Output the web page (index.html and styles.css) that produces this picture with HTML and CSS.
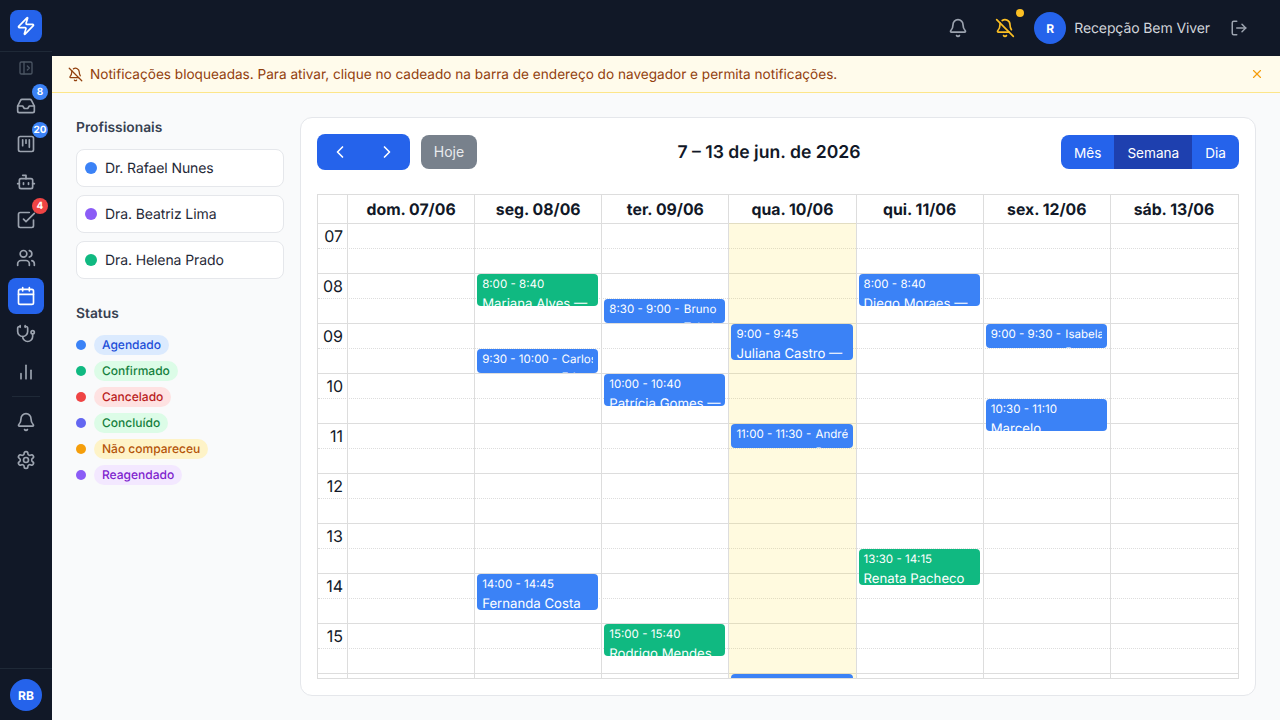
FILE: index.html
```html
<!DOCTYPE html>
<html lang="pt-BR">
<head>
    <meta charset="UTF-8">
    <meta name="viewport" content="width=device-width, initial-scale=1.0">
    <title>Agenda - Bem Viver</title>
    <link rel="stylesheet" href="styles.css">
</head>
<body>
    <svg class="sprite" xmlns="http://www.w3.org/2000/svg">
        <symbol id="i-zap" viewBox="0 0 24 24"><path d="M4 14a1 1 0 0 1-.78-1.63l9.9-10.2a.5.5 0 0 1 .86.46l-1.92 6.02A1 1 0 0 0 13 10h7a1 1 0 0 1 .78 1.63l-9.9 10.2a.5.5 0 0 1-.86-.46l1.92-6.02A1 1 0 0 0 11 14z"/></symbol>
        <symbol id="i-panel" viewBox="0 0 24 24"><rect x="3" y="3" width="18" height="18" rx="2"/><path d="M9 3v18"/><path d="m14 9 3 3-3 3"/></symbol>
        <symbol id="i-inbox" viewBox="0 0 24 24"><polyline points="22 12 16 12 14 15 10 15 8 12 2 12"/><path d="M5.45 5.11 2 12v6a2 2 0 0 0 2 2h16a2 2 0 0 0 2-2v-6l-3.45-6.89A2 2 0 0 0 16.76 4H7.24a2 2 0 0 0-1.79 1.11z"/></symbol>
        <symbol id="i-kanban" viewBox="0 0 24 24"><rect x="3" y="3" width="18" height="18" rx="2"/><path d="M8 7v7"/><path d="M12 7v4"/><path d="M16 7v9"/></symbol>
        <symbol id="i-bot" viewBox="0 0 24 24"><path d="M12 8V4H8"/><rect x="4" y="8" width="16" height="12" rx="2"/><path d="M2 14h2"/><path d="M20 14h2"/><path d="M15 13v2"/><path d="M9 13v2"/></symbol>
        <symbol id="i-check" viewBox="0 0 24 24"><path d="m9 11 3 3L22 4"/><path d="M21 12v7a2 2 0 0 1-2 2H5a2 2 0 0 1-2-2V5a2 2 0 0 1 2-2h11"/></symbol>
        <symbol id="i-users" viewBox="0 0 24 24"><path d="M16 21v-2a4 4 0 0 0-4-4H6a4 4 0 0 0-4 4v2"/><circle cx="9" cy="7" r="4"/><path d="M22 21v-2a4 4 0 0 0-3-3.87"/><path d="M16 3.13a4 4 0 0 1 0 7.75"/></symbol>
        <symbol id="i-calendar" viewBox="0 0 24 24"><path d="M8 2v4"/><path d="M16 2v4"/><rect x="3" y="4" width="18" height="18" rx="2"/><path d="M3 10h18"/></symbol>
        <symbol id="i-stethoscope" viewBox="0 0 24 24"><path d="M11 2v2"/><path d="M5 2v2"/><path d="M5 3H4a2 2 0 0 0-2 2v4a6 6 0 0 0 12 0V5a2 2 0 0 0-2-2h-1"/><path d="M8 15a6 6 0 0 0 12 0v-3"/><circle cx="20" cy="10" r="2"/></symbol>
        <symbol id="i-chart" viewBox="0 0 24 24"><path d="M18 20V10"/><path d="M12 20V4"/><path d="M6 20v-6"/></symbol>
        <symbol id="i-bell" viewBox="0 0 24 24"><path d="M10.268 21a2 2 0 0 0 3.464 0"/><path d="M3.262 15.326A1 1 0 0 0 4 17h16a1 1 0 0 0 .74-1.673C19.41 13.956 18 12.499 18 8A6 6 0 0 0 6 8c0 4.499-1.411 5.956-2.738 7.326"/></symbol>
        <symbol id="i-bell-off" viewBox="0 0 24 24"><path d="M10.268 21a2 2 0 0 0 3.464 0"/><path d="M17 17H4a1 1 0 0 1-.74-1.673C4.59 13.956 6 12.499 6 8a6 6 0 0 1 .258-1.742"/><path d="m2 2 20 20"/><path d="M8.668 3.01A6 6 0 0 1 18 8c0 2.687.77 4.653 1.707 6.05"/></symbol>
        <symbol id="i-settings" viewBox="0 0 24 24"><path d="M12.22 2h-.44a2 2 0 0 0-2 2v.18a2 2 0 0 1-1 1.73l-.43.25a2 2 0 0 1-2 0l-.15-.08a2 2 0 0 0-2.73.73l-.22.38a2 2 0 0 0 .73 2.73l.15.1a2 2 0 0 1 1 1.72v.51a2 2 0 0 1-1 1.74l-.15.09a2 2 0 0 0-.73 2.73l.22.38a2 2 0 0 0 2.73.73l.15-.08a2 2 0 0 1 2 0l.43.25a2 2 0 0 1 1 1.73V20a2 2 0 0 0 2 2h.44a2 2 0 0 0 2-2v-.18a2 2 0 0 1 1-1.73l.43-.25a2 2 0 0 1 2 0l.15.08a2 2 0 0 0 2.73-.73l.22-.39a2 2 0 0 0-.73-2.73l-.15-.08a2 2 0 0 1-1-1.74v-.5a2 2 0 0 1 1-1.74l.15-.09a2 2 0 0 0 .73-2.73l-.22-.38a2 2 0 0 0-2.73-.73l-.15.08a2 2 0 0 1-2 0l-.43-.25a2 2 0 0 1-1-1.73V4a2 2 0 0 0-2-2z"/><circle cx="12" cy="12" r="3"/></symbol>
        <symbol id="i-logout" viewBox="0 0 24 24"><path d="M9 21H5a2 2 0 0 1-2-2V5a2 2 0 0 1 2-2h4"/><polyline points="16 17 21 12 16 7"/><line x1="21" y1="12" x2="9" y2="12"/></symbol>
        <symbol id="i-x" viewBox="0 0 24 24"><path d="M18 6 6 18"/><path d="m6 6 12 12"/></symbol>
        <symbol id="i-left" viewBox="0 0 24 24"><path d="m15 18-6-6 6-6"/></symbol>
        <symbol id="i-right" viewBox="0 0 24 24"><path d="m9 18 6-6-6-6"/></symbol>
    </svg>

    <div class="app">
        <aside class="sidebar">
            <div class="logo-wrap">
                <div class="logo"><svg class="icon icon-20"><use href="#i-zap"/></svg></div>
            </div>
            <button class="sidebar-toggle"><svg class="icon icon-16"><use href="#i-panel"/></svg></button>
            <nav class="side-nav">
                <a class="nav-item"><svg class="icon icon-20"><use href="#i-inbox"/></svg><span class="nav-badge">8</span></a>
                <a class="nav-item"><svg class="icon icon-20"><use href="#i-kanban"/></svg><span class="nav-badge">20</span></a>
                <a class="nav-item"><svg class="icon icon-20"><use href="#i-bot"/></svg></a>
                <a class="nav-item"><svg class="icon icon-20"><use href="#i-check"/></svg><span class="nav-badge nav-badge-red">4</span></a>
                <a class="nav-item"><svg class="icon icon-20"><use href="#i-users"/></svg></a>
                <a class="nav-item active"><svg class="icon icon-20"><use href="#i-calendar"/></svg></a>
                <a class="nav-item"><svg class="icon icon-20"><use href="#i-stethoscope"/></svg></a>
                <a class="nav-item"><svg class="icon icon-20"><use href="#i-chart"/></svg></a>
                <div class="nav-sep"></div>
                <a class="nav-item"><svg class="icon icon-20"><use href="#i-bell"/></svg></a>
                <a class="nav-item"><svg class="icon icon-20"><use href="#i-settings"/></svg></a>
            </nav>
            <div class="sidebar-foot">
                <div class="avatar">RB</div>
            </div>
        </aside>

        <div class="main">
            <header class="topbar">
                <button class="top-btn"><svg class="icon icon-20"><use href="#i-bell"/></svg></button>
                <button class="top-btn top-btn-warn"><svg class="icon icon-20"><use href="#i-bell-off"/></svg><span class="top-dot"></span></button>
                <div class="avatar avatar-small">R</div>
                <span class="user-name">Recepção Bem Viver</span>
                <button class="top-btn top-btn-logout"><svg class="icon icon-18"><use href="#i-logout"/></svg></button>
            </header>

            <div class="banner">
                <svg class="icon icon-15"><use href="#i-bell-off"/></svg>
                <span class="banner-text">Notificações bloqueadas. Para ativar, clique no cadeado na barra de endereço do navegador e permita notificações.</span>
                <svg class="icon icon-14 banner-close"><use href="#i-x"/></svg>
            </div>

            <div class="content">
                <section class="filters">
                    <h3 class="filter-title">Profissionais</h3>
                    <div class="pro-list">
                        <div class="pro-card"><span class="pro-dot dot-blue"></span>Dr. Rafael Nunes</div>
                        <div class="pro-card"><span class="pro-dot dot-purple"></span>Dra. Beatriz Lima</div>
                        <div class="pro-card"><span class="pro-dot dot-green"></span>Dra. Helena Prado</div>
                    </div>
                    <h3 class="filter-title status-title">Status</h3>
                    <div class="status-list">
                        <div class="status-row"><span class="status-dot dot-blue"></span><span class="pill pill-blue">Agendado</span></div>
                        <div class="status-row"><span class="status-dot dot-green"></span><span class="pill pill-green">Confirmado</span></div>
                        <div class="status-row"><span class="status-dot dot-red"></span><span class="pill pill-red">Cancelado</span></div>
                        <div class="status-row"><span class="status-dot dot-indigo"></span><span class="pill pill-green">Concluído</span></div>
                        <div class="status-row"><span class="status-dot dot-amber"></span><span class="pill pill-amber">Não compareceu</span></div>
                        <div class="status-row"><span class="status-dot dot-purple"></span><span class="pill pill-purple">Reagendado</span></div>
                    </div>
                </section>

                <section class="cal-card">
                    <div class="toolbar">
                        <div class="toolbar-left">
                            <div class="nav-group">
                                <button class="cal-arrow"><svg class="icon icon-20"><use href="#i-left"/></svg></button>
                                <button class="cal-arrow"><svg class="icon icon-20"><use href="#i-right"/></svg></button>
                            </div>
                            <button class="today-btn">Hoje</button>
                        </div>
                        <h2 class="cal-title">7 – 13 de jun. de 2026</h2>
                        <div class="view-group">
                            <button class="view-btn">Mês</button>
                            <button class="view-btn active">Semana</button>
                            <button class="view-btn">Dia</button>
                        </div>
                    </div>

                    <div class="cal">
                        <div class="cal-head">
                            <div class="time-col"></div>
                            <div class="head-cell">dom. 07/06</div>
                            <div class="head-cell">seg. 08/06</div>
                            <div class="head-cell">ter. 09/06</div>
                            <div class="head-cell">qua. 10/06</div>
                            <div class="head-cell">qui. 11/06</div>
                            <div class="head-cell">sex. 12/06</div>
                            <div class="head-cell">sáb. 13/06</div>
                        </div>
                        <div class="cal-body">
                            <div class="slot"><span class="slot-label">07</span></div><div class="slot slot-minor"></div>
                            <div class="slot"><span class="slot-label">08</span></div><div class="slot slot-minor"></div>
                            <div class="slot"><span class="slot-label">09</span></div><div class="slot slot-minor"></div>
                            <div class="slot"><span class="slot-label">10</span></div><div class="slot slot-minor"></div>
                            <div class="slot"><span class="slot-label">11</span></div><div class="slot slot-minor"></div>
                            <div class="slot"><span class="slot-label">12</span></div><div class="slot slot-minor"></div>
                            <div class="slot"><span class="slot-label">13</span></div><div class="slot slot-minor"></div>
                            <div class="slot"><span class="slot-label">14</span></div><div class="slot slot-minor"></div>
                            <div class="slot"><span class="slot-label">15</span></div><div class="slot slot-minor"></div>
                            <div class="slot"><span class="slot-label">16</span></div><div class="slot slot-minor"></div>

                            <div class="day-cols">
                                <div class="time-col"></div>
                                <div class="day"></div>
                                <div class="day">
                                    <div class="event event-green" style="top: 51px; height: 32px">
                                        <div class="event-time">8:00 - 8:40</div>
                                        <div class="event-name">Mariana Alves — Consulta</div>
                                    </div>
                                    <div class="event event-short" style="top: 126px; height: 24px">
                                        <div class="event-time">9:30 - 10:00</div>
                                        <div class="event-name">Carlos Eduardo — Retorno</div>
                                    </div>
                                    <div class="event" style="top: 351px; height: 36px">
                                        <div class="event-time">14:00 - 14:45</div>
                                        <div class="event-name">Fernanda Costa — Consulta</div>
                                    </div>
                                </div>
                                <div class="day">
                                    <div class="event event-short" style="top: 76px; height: 24px">
                                        <div class="event-time">8:30 - 9:00</div>
                                        <div class="event-name">Bruno Toledo — Retorno</div>
                                    </div>
                                    <div class="event" style="top: 151px; height: 32px">
                                        <div class="event-time">10:00 - 10:40</div>
                                        <div class="event-name">Patrícia Gomes — Consulta</div>
                                    </div>
                                    <div class="event event-green" style="top: 401px; height: 32px">
                                        <div class="event-time">15:00 - 15:40</div>
                                        <div class="event-name">Rodrigo Mendes — Consulta</div>
                                    </div>
                                </div>
                                <div class="day day-today">
                                    <div class="event" style="top: 101px; height: 36px">
                                        <div class="event-time">9:00 - 9:45</div>
                                        <div class="event-name">Juliana Castro — Consulta</div>
                                    </div>
                                    <div class="event event-short" style="top: 201px; height: 24px">
                                        <div class="event-time">11:00 - 11:30</div>
                                        <div class="event-name">André Barros — Retorno</div>
                                    </div>
                                    <div class="event" style="top: 451px; height: 36px">
                                        <div class="event-time">16:00 - 16:45</div>
                                        <div class="event-name">Laura Tavares — Consulta</div>
                                    </div>
                                </div>
                                <div class="day">
                                    <div class="event" style="top: 51px; height: 32px">
                                        <div class="event-time">8:00 - 8:40</div>
                                        <div class="event-name">Diego Moraes — Consulta</div>
                                    </div>
                                    <div class="event event-green" style="top: 326px; height: 36px">
                                        <div class="event-time">13:30 - 14:15</div>
                                        <div class="event-name">Renata Pacheco — Consulta</div>
                                    </div>
                                </div>
                                <div class="day">
                                    <div class="event event-short" style="top: 101px; height: 24px">
                                        <div class="event-time">9:00 - 9:30</div>
                                        <div class="event-name">Isabela Duarte — Retorno</div>
                                    </div>
                                    <div class="event" style="top: 176px; height: 32px">
                                        <div class="event-time">10:30 - 11:10</div>
                                        <div class="event-name">Marcelo Vasconcelos — Consulta</div>
                                    </div>
                                </div>
                                <div class="day"></div>
                            </div>
                        </div>
                    </div>
                </section>
            </div>
        </div>
    </div>
</body>
</html>
```

FILE: styles.css
```css
* {
    box-sizing: border-box;
}
html, body {
    height: 100%;
}
body {
    margin: 0;
    overflow: hidden;
    font-family: Inter, "Liberation Sans", sans-serif;
    font-size: 14px;
    color: #111827;
    background: #f9fafb;
    text-rendering: geometricPrecision;
}
button {
    font: inherit;
    border: none;
    background: none;
    color: inherit;
    padding: 0;
}
h2, h3 {
    margin: 0;
}
.sprite {
    display: none;
}
.icon {
    display: block;
    flex: none;
    fill: none;
    stroke: currentColor;
    stroke-width: 2;
    stroke-linecap: round;
    stroke-linejoin: round;
}
.icon-14 { width: 14px; height: 14px; }
.icon-15 { width: 15px; height: 15px; }
.icon-16 { width: 16px; height: 16px; }
.icon-18 { width: 18px; height: 18px; }
.icon-20 { width: 20px; height: 20px; }

.app {
    display: flex;
    height: 720px;
}

/* sidebar */
.sidebar {
    width: 52px;
    flex: none;
    display: flex;
    flex-direction: column;
    background: #111827;
}
.logo-wrap {
    height: 52px;
    display: flex;
    justify-content: center;
    padding-top: 10px;
    border-bottom: 1px solid #1f2937;
}
.logo {
    width: 32px;
    height: 32px;
    display: flex;
    align-items: center;
    justify-content: center;
    border-radius: 8px;
    background: #2563eb;
    color: #fff;
}
.sidebar-toggle {
    display: flex;
    justify-content: center;
    margin-top: 8px;
    color: #4b5563;
}
.side-nav {
    flex: 1;
    display: flex;
    flex-direction: column;
    align-items: center;
    gap: 2px;
    padding-top: 12px;
}
.nav-item {
    position: relative;
    width: 36px;
    height: 36px;
    display: flex;
    align-items: center;
    justify-content: center;
    border-radius: 8px;
    color: #9ca3af;
}
.nav-item.active {
    background: #2563eb;
    color: #fff;
}
.nav-badge {
    position: absolute;
    top: -4px;
    right: -4px;
    min-width: 16px;
    height: 16px;
    display: flex;
    align-items: center;
    justify-content: center;
    border-radius: 50%;
    background: #3b82f6;
    color: #fff;
    font-size: 10px;
    font-weight: 700;
}
.nav-badge-red {
    background: #ef4444;
}
.nav-sep {
    width: 28px;
    height: 1px;
    margin: 4px 0 5px;
    background: #1f2937;
}
.sidebar-foot {
    height: 52px;
    display: flex;
    justify-content: center;
    padding-top: 10px;
    border-top: 1px solid #1f2937;
}
.avatar {
    width: 32px;
    height: 32px;
    display: flex;
    align-items: center;
    justify-content: center;
    border-radius: 50%;
    background: #2563eb;
    color: #fff;
    font-size: 12px;
    font-weight: 700;
}

/* top bar */
.main {
    flex: 1;
    min-width: 0;
    display: flex;
    flex-direction: column;
}
.topbar {
    height: 56px;
    flex: none;
    display: flex;
    align-items: center;
    justify-content: flex-end;
    padding-right: 32px;
    background: #111827;
}
.top-btn {
    position: relative;
    display: block;
    color: #9ca3af;
}
.top-btn-warn {
    margin-left: 27px;
    color: #fbbf24;
}
.top-dot {
    position: absolute;
    top: -9px;
    right: -9px;
    width: 8px;
    height: 8px;
    border-radius: 50%;
    background: #fbbf24;
}
.avatar-small {
    margin-left: 19px;
}
.user-name {
    margin-left: 8px;
    letter-spacing: -0.1px;
    color: #d1d5db;
}
.top-btn-logout {
    margin-left: 20px;
}

/* banner */
.banner {
    height: 37px;
    flex: none;
    display: flex;
    align-items: center;
    padding: 0 16px;
    background: #fffbeb;
    border-bottom: 1px solid #fde68a;
    color: #92400e;
    font-size: 13.6px;
}
.banner-text {
    flex: 1;
    margin: 2px 0 0 7px;
}
.banner-close {
    color: #f59e0b;
}

/* content */
.content {
    flex: 1;
    min-height: 0;
    display: flex;
    gap: 16px;
    padding: 25px 24px 24px;
}
.filters {
    width: 208px;
    flex: none;
}
.filter-title {
    font-size: 13.8px;
    line-height: 20px;
    font-weight: 600;
    color: #374151;
}
.status-title {
    margin-top: 25px;
}
.pro-list {
    display: flex;
    flex-direction: column;
    gap: 8px;
    margin-top: 11px;
}
.pro-card {
    height: 38px;
    display: flex;
    align-items: center;
    gap: 8px;
    padding: 0 8px;
    background: #fff;
    border: 1px solid #e5e7eb;
    border-radius: 8px;
    letter-spacing: -0.1px;
    color: #1f2937;
}
.pro-dot {
    width: 12px;
    height: 12px;
    border-radius: 50%;
}
.status-list {
    display: flex;
    flex-direction: column;
    gap: 6px;
    margin-top: 11px;
}
.status-row {
    display: flex;
    align-items: center;
    gap: 8px;
    height: 20px;
}
.status-dot {
    width: 10px;
    height: 10px;
    border-radius: 50%;
}
.dot-blue { background: #3b82f6; }
.dot-green { background: #10b981; }
.dot-red { background: #ef4444; }
.dot-indigo { background: #6366f1; }
.dot-amber { background: #f59e0b; }
.dot-purple { background: #8b5cf6; }
.pill {
    height: 20px;
    line-height: 20px;
    padding: 0 8px;
    border-radius: 9999px;
    font-size: 12px;
    font-weight: 500;
}
.pill-blue { background: #dbeafe; color: #1d4ed8; }
.pill-green { background: #dcfce7; color: #15803d; }
.pill-red { background: #fee2e2; color: #b91c1c; }
.pill-amber { background: #fef3c7; color: #b45309; }
.pill-purple { background: #f3e8ff; color: #7e22ce; }

/* calendar card */
.cal-card {
    flex: 1;
    min-width: 0;
    display: flex;
    flex-direction: column;
    margin-top: -1px;
    padding: 16px;
    background: #fff;
    border: 1px solid #e5e7eb;
    border-radius: 12px;
}
.toolbar {
    display: flex;
    align-items: center;
    justify-content: space-between;
    margin-bottom: 24px;
}
.toolbar-left {
    display: flex;
    align-items: center;
    gap: 11px;
}
.nav-group {
    display: flex;
    height: 36px;
    border-radius: 8px;
    background: #2563eb;
    color: #fff;
}
.cal-arrow {
    width: 46.5px;
    display: flex;
    align-items: center;
    justify-content: center;
}
.today-btn {
    width: 56px;
    height: 34px;
    padding-bottom: 2px;
    border-radius: 8px;
    background: #78818c;
    color: #e9ebee;
}
.cal-title {
    margin-top: 2px;
    font-size: 17.6px;
    line-height: 28px;
    font-weight: 600;
}
.view-group {
    display: flex;
    height: 34px;
    border-radius: 8px;
    overflow: hidden;
    background: #2563eb;
    color: #fff;
    font-size: 13.6px;
}
.view-btn {
    padding: 2px 13px 0;
}
.view-btn.active {
    background: #1e40af;
}

/* time grid */
.cal {
    flex: 1;
    min-height: 0;
    display: flex;
    flex-direction: column;
    border: 1px solid #ddd;
}
.cal-head {
    display: flex;
    height: 28px;
    flex: none;
    padding-right: 1px;
}
.time-col {
    width: 29px;
    flex: none;
}
.head-cell {
    flex: 1 1 0;
    min-width: 0;
    border-left: 1px solid #ddd;
    text-align: center;
    font-size: 15.8px;
    font-weight: 700;
    line-height: 30px;
}
.cal-body {
    position: relative;
    flex: 1;
    min-height: 0;
    overflow: hidden;
}
.slot {
    height: 25px;
    border-top: 1px solid #ddd;
}
.slot-minor {
    border-top: 1px dotted #ddd;
}
.slot-label {
    display: block;
    width: 29px;
    padding-right: 4px;
    text-align: right;
    font-size: 16px;
    line-height: 24px;
}
.day-cols {
    position: absolute;
    inset: 0 1px 0 0;
    display: flex;
}
.day {
    position: relative;
    flex: 1 1 0;
    min-width: 0;
    border-left: 1px solid #ddd;
}
.day-today {
    background: rgba(255, 220, 40, 0.15);
}
.event {
    position: absolute;
    left: 2px;
    right: 3px;
    padding: 1px 3px 0 5px;
    overflow: hidden;
    border-radius: 4px;
    background: #3b82f6;
    color: #fff;
}
.event-green {
    background: #10b981;
}
.event-time {
    font-size: 11.56px;
    line-height: 18px;
    margin-bottom: 1px;
    white-space: nowrap;
}
.event-name {
    font-size: 13.2px;
    line-height: 20px;
}
.event-short {
    display: flex;
    padding-right: 5px;
}
.event-short .event-time {
    margin-right: 1px;
}
.event-short .event-time::after {
    content: "\00a0-\00a0";
}
.event-short .event-name {
    flex: 1;
    min-width: 0;
    overflow: hidden;
    font-size: 11.56px;
    line-height: 18px;
}
```
